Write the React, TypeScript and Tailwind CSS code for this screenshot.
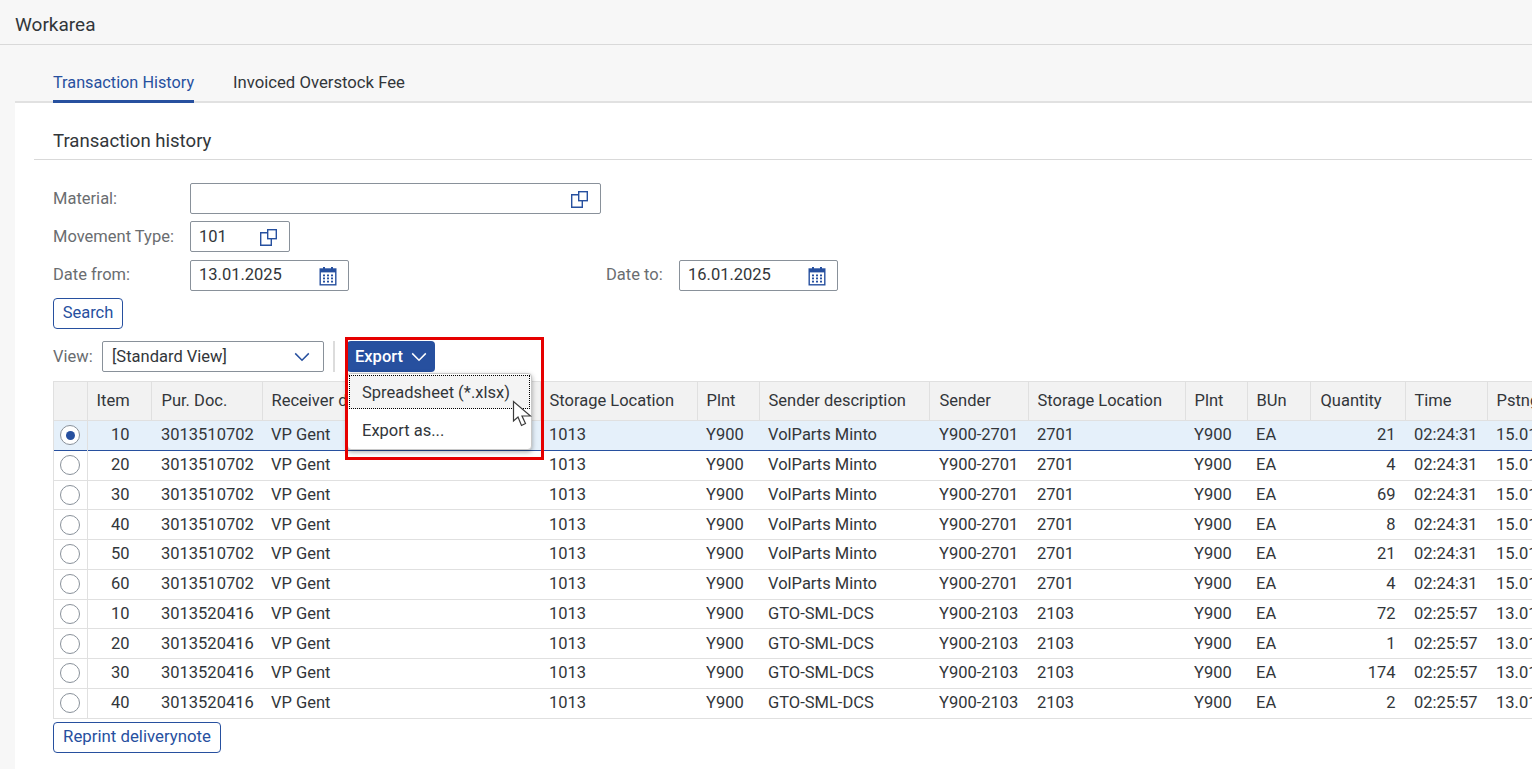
import React from "react";

const rows: [string, string, string, string, string, string, string][] = [
  ["10", "3013510702", "VolParts Minto", "Y900-2701", "2701", "21", "02:24:31"],
  ["20", "3013510702", "VolParts Minto", "Y900-2701", "2701", "4", "02:24:31"],
  ["30", "3013510702", "VolParts Minto", "Y900-2701", "2701", "69", "02:24:31"],
  ["40", "3013510702", "VolParts Minto", "Y900-2701", "2701", "8", "02:24:31"],
  ["50", "3013510702", "VolParts Minto", "Y900-2701", "2701", "21", "02:24:31"],
  ["60", "3013510702", "VolParts Minto", "Y900-2701", "2701", "4", "02:24:31"],
  ["10", "3013520416", "GTO-SML-DCS", "Y900-2103", "2103", "72", "02:25:57"],
  ["20", "3013520416", "GTO-SML-DCS", "Y900-2103", "2103", "1", "02:25:57"],
  ["30", "3013520416", "GTO-SML-DCS", "Y900-2103", "2103", "174", "02:25:57"],
  ["40", "3013520416", "GTO-SML-DCS", "Y900-2103", "2103", "2", "02:25:57"],
];

function CopyIcon() {
  return (
    <svg width="18" height="18" viewBox="0 0 18 18" fill="none" className="shrink-0">
      <path d="M8 4.7H1.7V17.3H12.3V11" stroke="#27509f" strokeWidth="1.4" />
      <rect x="8.7" y="1.7" width="8.6" height="9" stroke="#27509f" strokeWidth="1.4" />
    </svg>
  );
}

function CalIcon() {
  return (
    <svg width="18" height="20" viewBox="0 0 18 20" fill="none" className="shrink-0">
      <rect x="1.2" y="3" width="15.6" height="15.8" stroke="#27509f" strokeWidth="1.4" />
      <rect x="1" y="3" width="16" height="3.4" fill="#27509f" />
      <rect x="4" y="1" width="2" height="3.5" fill="#27509f" />
      <rect x="12" y="1" width="2" height="3.5" fill="#27509f" />
      {[8.5, 11.5, 14.7].map((y) =>
        [4, 8, 12].map((x) => <rect key={`${x}-${y}`} x={x} y={y} width="2" height="1.8" fill="#27509f" />)
      )}
    </svg>
  );
}

function Chevron({ color }: { color: string }) {
  return (
    <svg width="16" height="10" viewBox="0 0 16 10" fill="none">
      <path d="M1.2 1.4L8 8.2L14.8 1.4" stroke={color} strokeWidth="1.5" />
    </svg>
  );
}

function Field({ w, value, icon, pr, textClass = "" }: { w: string; value?: string; icon: React.ReactNode; pr: string; textClass?: string }) {
  return (
    <div className={`${w} ${pr} h-[31px] flex items-center justify-between pl-[8px] bg-white border border-[#89919a] rounded-[2px] text-[#32363a]`}>
      <span className={textClass}>{value}</span>
      {icon}
    </div>
  );
}

const cols = [34, 64, 111, 278, 157, 62, 170, 99, 157, 62, 63, 95, 82, 120];
const heads = ["", "Item", "Pur. Doc.", "Receiver description", "Storage Location", "Plnt", "Sender description", "Sender", "Storage Location", "Plnt", "BUn", "Quantity", "Time", "Pstng Date"];

export default function App() {
  return (
    <div className="relative w-[1532px] h-[769px] overflow-hidden bg-[#f7f7f7] text-[16.5px] leading-[20px] text-[#32363a]" style={{ fontFamily: 'Roboto, sans-serif' }}>
      <div className="h-[45px] border-b border-[#d9d9d9] flex items-center pl-[15px] pt-[6px] text-[19px]">Workarea</div>

      <div className="h-[58px] ml-[15px] border-b-2 border-[#e1e1e1] flex items-end pl-[38px] gap-[39px]">
        <div className="w-[141px] h-[58px] -mb-[2px] flex items-center pt-[20px] border-b-[3px] border-[#27509f] text-[#27509f] text-[16.25px] whitespace-nowrap">Transaction History</div>
        <div className="h-[58px] -mb-[2px] flex items-center pt-[20px] border-b-[3px] border-transparent text-[16.7px]">Invoiced Overstock Fee</div>
      </div>

      <div className="ml-[15px] bg-white h-[666px]">
        <div className="ml-[19px] pl-[19px] h-[57px] border-b border-[#d9d9d9] flex items-center pt-[20px] text-[18.6px]">Transaction history</div>

        <div className="pl-[38px] pt-[23px]">
          <div className="flex items-center">
            <div className="w-[137px] text-[#6a6d70]">Material:</div>
            <Field w="w-[411px]" icon={<CopyIcon />} pr="pr-[12px]" />
          </div>
          <div className="flex items-center mt-[7px]">
            <div className="w-[137px] text-[#6a6d70]">Movement Type:</div>
            <Field w="w-[100px]" value="101" icon={<CopyIcon />} pr="pr-[12px]" />
          </div>
          <div className="flex items-center mt-[8px]">
            <div className="w-[137px] text-[#6a6d70] pb-[2px]">Date from:</div>
            <Field w="w-[159px]" value="13.01.2025" icon={<CalIcon />} pr="pr-[11px]" textClass="pb-[2px]" />
            <div className="ml-[257px] w-[73px] text-[#6a6d70] pb-[2px]">Date to:</div>
            <Field w="w-[159px]" value="16.01.2025" icon={<CalIcon />} pr="pr-[11px]" textClass="pb-[2px]" />
          </div>
          <button className="mt-[7px] h-[31px] w-[70px] pb-[2px] border border-[#27509f] rounded-[4px] bg-white text-[#27509f] flex items-center justify-center">Search</button>

          <div className="flex items-center mt-[12px] h-[31px]">
            <div className="w-[49px] text-[#6a6d70]">View:</div>
            <div className="w-[222px] h-[31px] pl-[9px] pr-[13px] flex items-center justify-between border border-[#89919a] rounded-[2px]">
              <span>[Standard View]</span>
              <Chevron color="#27509f" />
            </div>
            <div className="ml-[9px] w-[2px] h-[31px] bg-[#dcdcdc]" />
            <button className="ml-[12px] w-[88px] h-[31px] rounded-[4px] bg-[#27509f] text-white flex items-center justify-center gap-[8px] font-medium">
              <span>Export</span>
              <Chevron color="#ffffff" />
            </button>
          </div>

          <div className="mt-[9px] overflow-hidden">
            <table className="table-fixed border-collapse w-[1554px]">
              <colgroup>
                {cols.map((c, i) => (
                  <col key={i} style={{ width: c }} />
                ))}
              </colgroup>
              <thead>
                <tr className="h-[39px] bg-[#f2f2f2] border-y border-[#e0e0e0]">
                  {heads.map((h, i) => (
                    <th key={i} className={`font-normal text-left pr-0 border-l border-[#e0e0e0] whitespace-nowrap overflow-hidden ${i === 2 || i === 7 || i === 11 ? "pl-[9.5px]" : "pl-[8.5px]"}`}>{h}</th>
                  ))}
                </tr>
              </thead>
              <tbody>
                {rows.map((r, i) => (
                  <tr key={i} className={`h-[29.75px] border-b ${i === 0 ? "bg-[#e5f0fa] border-[#27509f]" : "border-[#e0e0e0]"}`}>
                    <td className="border-x border-[#e0e0e0] pr-[1px]">
                      <div className="flex justify-center">
                        <div className="w-[20px] h-[20px] rounded-full border border-[#89919a] bg-white flex items-center justify-center">
                          {i === 0 && <div className="w-[9px] h-[9px] rounded-full bg-[#27509f]" />}
                        </div>
                      </div>
                    </td>
                    <td className="text-right pr-[22px]">{r[0]}</td>
                    <td className="pl-[9.5px]">{r[1]}</td>
                    <td className="pl-[8.5px]">VP Gent</td>
                    <td className="pl-[8.5px]">1013</td>
                    <td className="pl-[8.5px]">Y900</td>
                    <td className="pl-[8.5px]">{r[2]}</td>
                    <td className="pl-[9.5px]">{r[3]}</td>
                    <td className="pl-[8.5px]">{r[4]}</td>
                    <td className="pl-[8.5px]">Y900</td>
                    <td className="pl-[8.5px]">EA</td>
                    <td className="text-right pr-[10px]">{r[5]}</td>
                    <td className="pl-[8.5px]">{r[6]}</td>
                    <td className="pl-[8.5px] whitespace-nowrap">{i < 6 ? "15.01.2025" : "13.01.2025"}</td>
                  </tr>
                ))}
              </tbody>
            </table>
          </div>

          <button className="mt-[3px] h-[31px] w-[168px] pb-[2px] border border-[#27509f] rounded-[4px] bg-white text-[#27509f] text-[16.8px] flex items-center justify-center">Reprint deliverynote</button>
        </div>
      </div>

      {/* Export menu */}
      <div className="absolute left-[347px] top-[373px] w-[185px] h-[77px] bg-white rounded-[4px] border border-[#c8c8c8] shadow-[0_2px_5px_rgba(0,0,0,0.35)] p-[1px]">
        <div className="h-[34px] pl-[12px] pt-[1px] flex items-center bg-[#f4f4f4] border border-dotted border-black">Spreadsheet (*.xlsx)</div>
        <div className="h-[40px] pl-[13px] pt-[3px] flex items-center">Export as...</div>
      </div>

      {/* Annotation */}
      <div className="absolute left-[345px] top-[337px] w-[199px] h-[123px] border-[3px] border-[#e60000]" />

      {/* Cursor */}
      <svg className="absolute left-[512px] top-[400px]" width="20" height="28" viewBox="0 0 20 28">
        <path d="M1.5 1.5V21L6 17L9.5 25.5L13.5 23.5L10 16H18.5Z" fill="#fff" stroke="#3a3a3a" strokeWidth="1.2" />
      </svg>
    </div>
  );
}
